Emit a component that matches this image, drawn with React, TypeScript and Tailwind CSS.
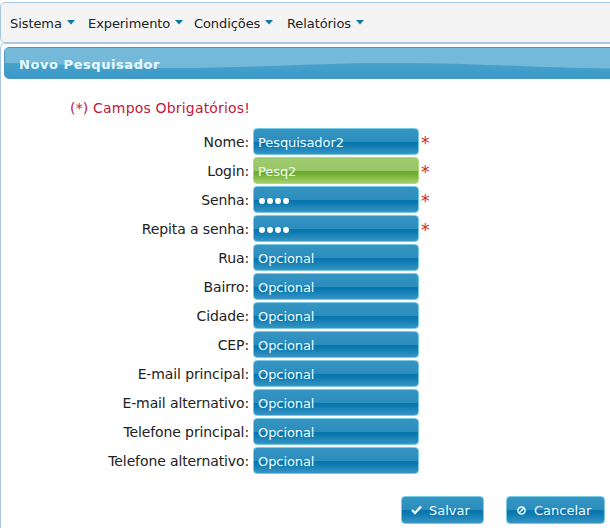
const menus = [
  { label: "Sistema", width: "w-[78px]" },
  { label: "Experimento", width: "w-[106px]" },
  { label: "Condições", width: "w-[93px]" },
  { label: "Relatórios", width: "w-[90px]" },
];

type Field = { label: string; value: string; required?: boolean; secret?: boolean; active?: boolean };

const fields: Field[] = [
  { label: "Nome:", value: "Pesquisador2", required: true },
  { label: "Login:", value: "Pesq2", required: true, active: true },
  { label: "Senha:", value: "", required: true, secret: true },
  { label: "Repita a senha:", value: "", required: true, secret: true },
  { label: "Rua:", value: "Opcional" },
  { label: "Bairro:", value: "Opcional" },
  { label: "Cidade:", value: "Opcional" },
  { label: "CEP:", value: "Opcional" },
  { label: "E-mail principal:", value: "Opcional" },
  { label: "E-mail alternativo:", value: "Opcional" },
  { label: "Telefone principal:", value: "Opcional" },
  { label: "Telefone alternativo:", value: "Opcional" },
];

const blue =
  "border-[#78cbe4] bg-[linear-gradient(#3594c2_0%,#2c8dbd_50%,#0875ad_51%,#0a78b0_62%,#3795c3_100%)]";
const green =
  "border-[#b0d878] bg-[linear-gradient(#9ecb70_0%,#98c667_50%,#6dab2c_51%,#70ad30_62%,#a4d06c_100%)]";

function FieldRow({ field }: { field: Field }) {
  return (
    <div className="flex h-[27px] items-center">
      <label className="w-[249px] pt-px text-right tracking-[-0.12px]">{field.label}</label>
      <div
        className={`ml-1 flex h-[27px] w-[166px] items-center rounded-[4px] border px-1 text-[13px] text-[#effcff] ${
          field.active ? green : blue
        }`}
      >
        {field.secret ? (
          <div className="ml-px mt-0.5 flex gap-0.5">
            {[0, 1, 2, 3].map((n) => (
              <span key={n} className="size-1.5 rounded-full bg-white" />
            ))}
          </div>
        ) : (
          <input className="mt-[3px] w-full bg-transparent tracking-[-0.08px] outline-none" defaultValue={field.value} />
        )}
      </div>
      {field.required && <span className="ml-0.5 mt-[3px] text-[17px] text-[#c82830]">*</span>}
    </div>
  );
}

export default function App() {
  return (
    <div className="flex h-[528px] w-[610px] flex-col overflow-hidden bg-white pt-0.5 font-['DejaVu_Sans',sans-serif] text-[14px] leading-[18px] text-[#222]">
      <nav className="flex h-[41px] w-[620px] shrink-0 items-center rounded-[5px] border border-[#a6c9e2] bg-[#f4f4f4] pl-[9px] pt-0.5 text-[13px]">
        {menus.map((menu) => (
          <div key={menu.label} className={`flex shrink-0 items-center gap-[5px] ${menu.width}`}>
            <span className="tracking-[-0.08px]">{menu.label}</span>
            <svg width="8" height="5" viewBox="0 0 8 5" className="-mt-[3px] shrink-0 fill-[#0c76ab]">
              <path d="M0 0h8L4 4.5z" />
            </svg>
          </div>
        ))}
      </nav>
      <main className="h-[520px] w-[620px] shrink-0 rounded-t-[5px] border border-[#a6c9e2] p-[3px]">
        <header className="relative flex h-8 items-center overflow-hidden rounded-[5px] border border-[#4a99bd] bg-[linear-gradient(#55a9d0,#3a9ac8)] pl-3.5 text-[13px] font-bold text-[#eafaff]">
          <svg className="absolute inset-0" width="620" height="31" viewBox="0 0 620 31">
            <path d="M0 0H620V20.5C535 20.5 480 15 390 15C310 15 250 20 170 20C100 20 50 15 0 15Z" fill="#74b9d9" />
          </svg>
          <h1 className="relative mt-[3px] tracking-[0.56px]">Novo Pesquisador</h1>
        </header>
        <p className="mt-5 pl-[66px] tracking-[0.18px] text-[#c01838]">(*) Campos Obrigatórios!</p>
        <form className="-ml-1 mt-[11px] flex flex-col gap-0.5">
          {fields.map((field) => (
            <FieldRow key={field.label} field={field} />
          ))}
          <div className="mt-5 flex gap-[22px] pl-[401px] text-[13px] text-[#effcff]">
            <button type="button" className={`flex h-7 w-[83px] items-center rounded-[4px] border pl-[9px] ${blue}`}>
              <svg width="11" height="10" viewBox="0 0 11 10" fill="none" stroke="currentColor" strokeWidth="2.4">
                <path d="M1 5l3 3 6-6.5" />
              </svg>
              <span className="ml-[7px] mt-0.5">Salvar</span>
            </button>
            <button type="button" className={`flex h-7 w-[99px] items-center rounded-[4px] border pl-[10px] ${blue}`}>
              <svg width="9" height="9" viewBox="0 0 8 8" fill="none" stroke="currentColor" strokeWidth="1.3">
                <circle cx="4" cy="4" r="3.2" />
                <path d="M2 6l4-4" />
              </svg>
              <span className="ml-2 mt-0.5">Cancelar</span>
            </button>
          </div>
        </form>
      </main>
    </div>
  );
}
